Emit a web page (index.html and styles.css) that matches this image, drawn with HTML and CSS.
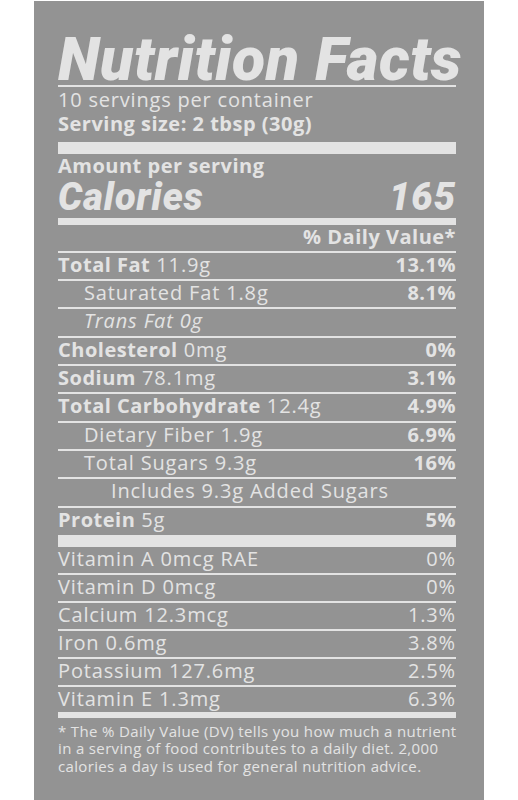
FILE: index.html
```html
<!DOCTYPE html>
<html lang="en">
<head>
  <meta charset="UTF-8">
  <title>Nutrition Facts</title>
  <link rel="stylesheet" href="styles.css">
</head>
<body>
  <div class="label">
    <h1 class="title">Nutrition Facts</h1>
    <div class="servings">
      <div>10 servings per container</div>
      <div class="bold">Serving size: 2 tbsp (30g)</div>
    </div>

    <div class="calories-box">
      <div class="bold">Amount per serving</div>
      <div class="calories"><span>Calories</span><span>165</span></div>
    </div>

    <div class="dv-head">% Daily Value*</div>

    <div class="row"><span><b>Total Fat</b> 11.9g</span><b>13.1%</b></div>
    <div class="row sub"><span>Saturated Fat 1.8g</span><b>8.1%</b></div>
    <div class="row sub"><i>Trans Fat 0g</i></div>
    <div class="row"><span><b>Cholesterol</b> 0mg</span><b>0%</b></div>
    <div class="row"><span><b>Sodium</b> 78.1mg</span><b>3.1%</b></div>
    <div class="row"><span><b>Total Carbohydrate</b> 12.4g</span><b>4.9%</b></div>
    <div class="row sub"><span>Dietary Fiber 1.9g</span><b>6.9%</b></div>
    <div class="row sub"><span>Total Sugars 9.3g</span><b>16%</b></div>
    <div class="row sub2"><span>Includes 9.3g Added Sugars</span></div>
    <div class="row last"><span><b>Protein</b> 5g</span><b>5%</b></div>

    <div class="vitamins">
      <div class="row"><span>Vitamin A 0mcg RAE</span><span>0%</span></div>
      <div class="row"><span>Vitamin D 0mcg</span><span>0%</span></div>
      <div class="row"><span>Calcium 12.3mcg</span><span>1.3%</span></div>
      <div class="row"><span>Iron 0.6mg</span><span>3.8%</span></div>
      <div class="row"><span>Potassium 127.6mg</span><span>2.5%</span></div>
      <div class="row last"><span>Vitamin E 1.3mg</span><span>6.3%</span></div>
    </div>

    <p class="footnote">* The % Daily Value (DV) tells you how much a nutrient<br>in a serving of food contributes to a daily diet. 2,000<br>calories a day is used for general nutrition advice.</p>
  </div>
</body>
</html>
```

FILE: styles.css
```css
body {
  margin: 0;
  background: #ffffff;
  font-family: "Open Sans", "Liberation Sans", sans-serif;
  font-weight: 400;
  color: #e3e3e3;
}
.label {
  margin: 1px 0 0 34px;
  width: 398px;
  min-height: 799px;
  padding: 0 28px 0 24px;
  background: #939393;
}
.title {
  margin: 0;
  padding-top: 34.4px;
  font-family: Roboto, "Liberation Sans", sans-serif;
  font-size: 61px;
  line-height: 49.6px;
  font-weight: 900;
  font-style: italic;
  letter-spacing: 0.5px;
  white-space: nowrap;
  border-bottom: 2px solid #e3e3e3;
}
.servings {
  font-size: 20px;
  line-height: 24px;
  letter-spacing: 0.8px;
  padding: 1px 0 6px;
  border-bottom: 12px solid #e3e3e3;
}
.bold,
.row b,
.dv-head {
  font-weight: 700;
  letter-spacing: 0.5px;
}
.calories-box {
  font-size: 20px;
  line-height: 24px;
  padding-bottom: 2px;
  border-bottom: 7px solid #e3e3e3;
}
.calories {
  display: flex;
  justify-content: space-between;
  font-family: Roboto, "Liberation Sans", sans-serif;
  font-size: 38px;
  line-height: 38px;
  font-weight: 900;
  font-style: italic;
  letter-spacing: 1px;
}
.dv-head {
  text-align: right;
  font-size: 20px;
  line-height: 24px;
  padding-bottom: 1.7px;
  border-bottom: 2px solid #e3e3e3;
}
.row {
  display: flex;
  justify-content: space-between;
  font-size: 20px;
  line-height: 24px;
  height: 24px;
  letter-spacing: 0.85px;
  padding-bottom: 2.33px;
  border-bottom: 2px solid #e3e3e3;
}
.row.sub {
  padding-left: 26px;
}
.row.sub2 {
  padding-left: 53px;
}
.row.last {
  padding-bottom: 3.3px;
  border-bottom: 12px solid #e3e3e3;
}
.vitamins .row {
  padding-bottom: 2px;
}
.vitamins .row.last {
  padding-bottom: 1px;
  border-bottom: 6px solid #e3e3e3;
}
.footnote {
  margin: 5px 0 0;
  font-size: 15px;
  line-height: 17.5px;
  letter-spacing: 0.35px;
  white-space: nowrap;
}
```
